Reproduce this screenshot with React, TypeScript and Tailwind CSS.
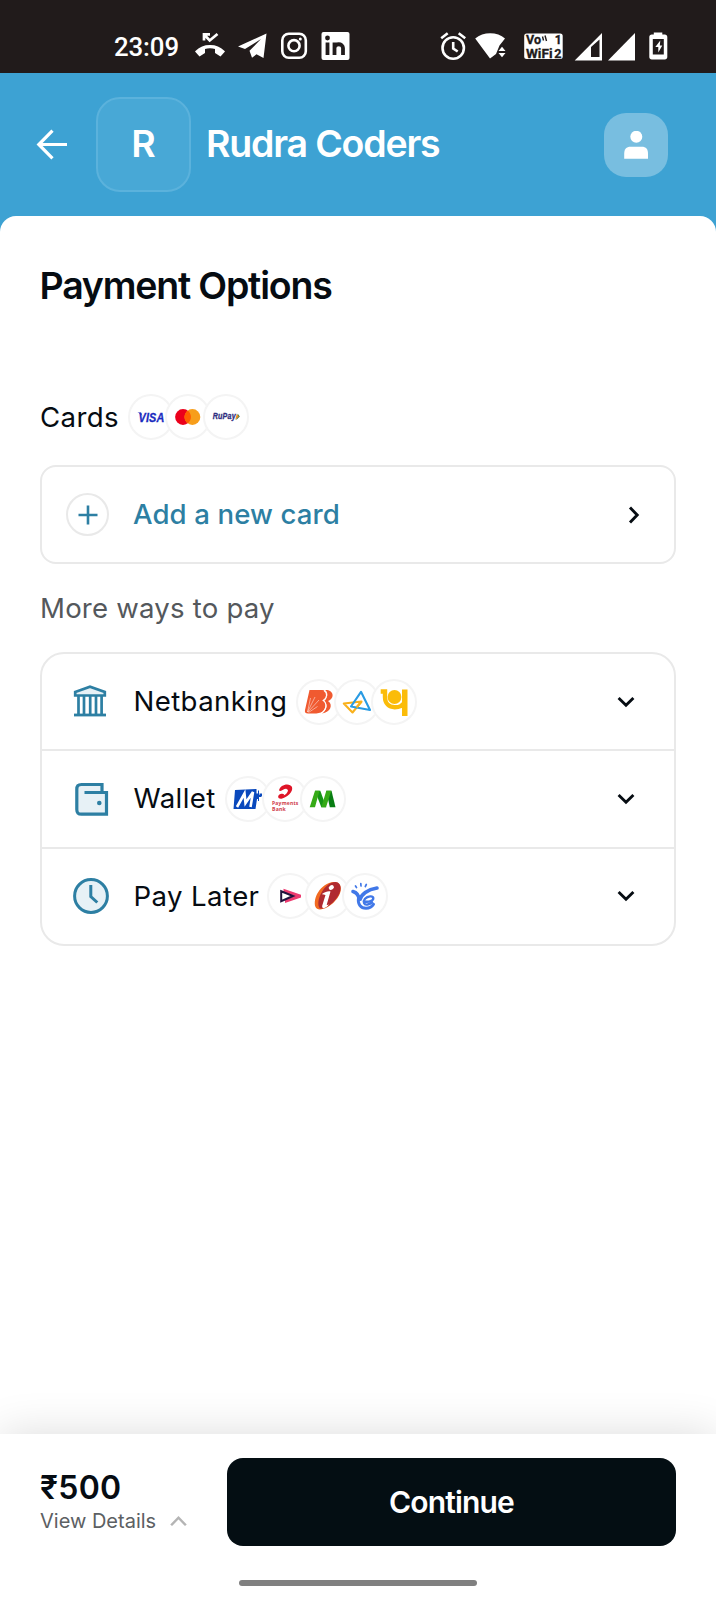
import React from "react";

const Stack = ({ children }: { children: React.ReactNode }) => (
  <div className="flex shrink-0 items-center">
    {React.Children.map(children, (child, i) => (
      <svg
        viewBox="0 0 46 46"
        className={
          i === 0
            ? "size-[46px] rounded-full bg-white outline-2 -outline-offset-2 outline-[#f4f4f4]"
            : "-ml-[8.3px] size-[46px] rounded-full bg-white outline-2 -outline-offset-2 outline-[#f4f4f4]"
        }
      >
        {child}
      </svg>
    ))}
  </div>
);

const Visa = () => (
  <g>
    <text x="10.500" y="27.600" textLength="26" lengthAdjust="spacingAndGlyphs" fontSize="12.300" fill="#1a2bc0" stroke="#1a2bc0" strokeWidth=".3" className="font-['Liberation_Sans'] font-bold italic">VISA</text>
    <path d="M9.500 18.600h3.500l1.500 4c-.8-2-2.500-3.200-5-4z" fill="#1a2bc0" />
  </g>
);
const Mastercard = () => (
  <g>
    <circle cx="18" cy="23" r="7.900" fill="#eb001b" />
    <circle cx="27.400" cy="23" r="7.900" fill="#f79e1b" />
    <path d="M22.700 16.600a7.900 7.900 0 0 1 0 12.800a7.900 7.900 0 0 1 0-12.800z" fill="#ff5f00" />
  </g>
);
const Rupay = () => (
  <g>
    <text x="9.800" y="25.400" textLength="23" lengthAdjust="spacingAndGlyphs" fontSize="8.500" fill="#302f80" stroke="#302f80" strokeWidth=".3" className="font-['Liberation_Sans'] font-bold italic">RuPay</text>
    <path d="M34.800 19.800l2 2.800-3.600 3.400z" fill="#2f7d4f" />
    <path d="M33.800 19.800l2 2.800-3.600 3.400z" fill="#f08a24" />
  </g>
);
const Baroda = () => (
  <g>
    <path d="M13.500 11h12.500c5.500 0 6.500 7.500 1.500 10.500 4 2.500 2 8.500-1 11-2 1.600-5 2-9 2H12c-2.500 0-3.500-1-3-3.500z" fill="#f05a30" />
    <path d="M29 11c8.500-.5 10.500 8 3 11 5.500 3.500 2.500 11.500-6 12.500 5.500-4 6-9.500 2-12.500 4-3 4.500-8.500 1-11z" fill="#f05a30" />
    <path d="M28 11.500c4 2.500 3 8-.8 10 4.300 3 3.300 9.500-1.700 12.500" fill="none" stroke="#fff" strokeWidth="1.100" />
    <path d="M11.500 33L14.500 19M11.500 33L19 18M12 33L23 21M12.500 33.500l9-6" stroke="#fff" strokeWidth=".5" />
  </g>
);
const Axis = () => (
  <g fill="none" strokeWidth="2.100" strokeLinejoin="round">
    <path d="M9.800 24.500L27.500 22.500L18.500 33.500Z" stroke="#f9b11c" />
    <path d="M27 12.800L36 31L17 27.500Z" stroke="#299be3" />
    <path d="M27.500 22.500l-5 6" stroke="#f9b11c" />
  </g>
);
const Pnb = () => (
  <g>
    <path d="M9.700 12.500H14V18C14 24.500 18 28.200 23.700 28.200S31 26.500 33.600 24" fill="none" stroke="#fbbc09" strokeWidth="4.400" />
    <path d="M31 10.500h5.500V37h-5.500z" fill="#fbbc09" />
    <circle cx="23.500" cy="18" r="6.900" fill="#fbbc09" />
  </g>
);
const Mobikwik = () => (
  <g>
    <path d="M10 14l21.500-1v4.500h1.500v-3h1v4.500h2v2h-2v4h-1v-2H32L30.500 33H8.500z" fill="#0a49bd" />
    <path d="M34.500 17.500h2.500v3h-2.500z" fill="#0a49bd" />
    <path d="M12 31l7.500-13.500 1 9.500 7.500-11-2.500 15" fill="none" stroke="#fff" strokeWidth="2.600" />
  </g>
);
const Airtel = () => (
  <g>
    <path d="M17 14.500C18 8 28 6.500 30 11C31.500 16 25 21.500 19.500 22.700C15.500 23.200 15 19.500 18.500 18C21.700 17.300 22.800 18.500 21.500 19.600C25.500 17.600 27.500 13.500 24.500 12.900C21.500 12.500 19.500 16.300 17 14.500Z" fill="#df1528" />
    <text x="10" y="28.800" textLength="26.500" lengthAdjust="spacingAndGlyphs" fontSize="5.600" fill="#cf3c4c" className="font-['Open_Sans'] font-bold">Payments</text>
    <text x="10" y="34.800" textLength="14" lengthAdjust="spacingAndGlyphs" fontSize="5.600" fill="#cf3c4c" className="font-['Open_Sans'] font-bold">Bank</text>
  </g>
);
const GreenM = () => (
  <g>
    <path d="M15 14.700h5.300l6 16.600h-5z" fill="#159415" />
    <path d="M26.300 14.700h5.200l4 16.600h-5.700z" fill="#087d13" />
    <path d="M15 14.700h4.500L15 31.300H9.700zM26.300 14.700h5L26 31.300h-4.700z" fill="#35aa16" />
  </g>
);
const LazyPay = () => (
  <g>
    <path d="M16.500 15.800L34 21.700V24.600L18 30V26.500L27.500 23L16.500 19.500z" fill="#ed3b70" />
    <path d="M14.200 18.300L26 23L14.200 28.200Z" fill="#fff" stroke="#20123d" strokeWidth="2" />
  </g>
);
const Icici = () => (
  <g>
    <path d="M10.500 34C7.500 26 15 10 29 9C38 9 38 20 30 28C23 36 12.500 39 10.500 34z" fill="#f26a22" />
    <path d="M14 34C11 26 20 9 30.500 9C37.500 9.500 37 19 31 26C25 34 15 38 14 34z" fill="#b02a30" />
    <ellipse cx="26.300" cy="14.500" rx="2.800" ry="2.200" transform="rotate(-35 26.300 14.500)" fill="#fff" />
    <path d="M17 21c3.500-2 5.500-3 8.500-2.500L21.800 31.500c0 1 1.200.5 2.200-.5-2 4-7.500 6-6.800 1.800L20.500 22c-1.300-.5-2.300 0-3.500-1z" fill="#fff" />
  </g>
);
const PayYe = () => (
  <g fill="none" stroke="#4178e8" strokeLinecap="round">
    <path d="M11 18.500c4 1 6 4.500 6.500 9 1.500-6 8-11 17.500-12.500" strokeWidth="3.600" />
    <path d="M16.500 25c-1 6 2 10.300 7.500 10.300 4 0 6-1.500 7.500-4" strokeWidth="3" />
    <path d="M22 28.500c5 .8 9.500-.5 9.300-3.500-.3-2.500-5.500-2.200-8.300.8-2.500 3-1 6.500 2.500 5.700 2-.3 3.500-.8 4.700-2" strokeWidth="2.300" />
    <path d="M13.500 13l1 1.500M18.800 10.500l.2 2.500M24.300 11.500l-1 2" strokeWidth="1.700" />
  </g>
);

const BankIcon = () => (
  <svg viewBox="0 0 36 34" className="mb-0.5 h-[34px] w-9" fill="none" stroke="#2d7fa3" strokeWidth="2.700">
    <path d="M2.200 8L17 2.800L31.800 8V11.500H2.200z" fill="#e7f1f6" />
    <path d="M5.500 11.500v19M11 30.500v-19M17.200 30.500v-19M23 11.500v19M28.600 30.500v-19" />
    <path d="M1 31H33" strokeWidth="2.800" />
  </svg>
);
const WalletIcon = () => (
  <svg viewBox="0 0 36 36" className="size-9" fill="none" stroke="#2d7fa3" strokeWidth="3.200">
    <path d="M29 10.500V3.500H8.500C5 3.500 3.800 5 3.800 8.500v20c0 3.500 1.300 4.700 4.700 4.700h25V11.500H11.500" fill="#e7f1f6" />
    <circle cx="26.300" cy="22" r="2.300" fill="#2d7fa3" stroke="none" />
  </svg>
);
const ClockIcon = () => (
  <svg viewBox="0 0 36 36" className="size-9" fill="none" stroke="#2d7fa3" strokeWidth="3">
    <circle cx="18" cy="18" r="16.400" fill="#e7f1f6" />
    <path d="M17.800 7v11.500l6.500 6" />
  </svg>
);

const Down = () => (
  <svg viewBox="0 0 20 20" className="size-5 shrink-0" fill="none" stroke="#060c12" strokeWidth="2.900">
    <path d="M2.600 6l7.400 7.200L17.400 6" />
  </svg>
);

const Row = ({ icon, label, gap, children }: { icon: React.ReactNode; label: string; gap: string; children: React.ReactNode }) => (
  <div className="flex h-[97.300px] items-center border-b-2 border-[#e9e9e9] pr-[38px] pl-[31px] last:h-[95.800px] last:border-b-0">
    <div className="flex w-[60.500px] shrink-0">{icon}</div>
    <span className={`${gap} shrink-0 pb-px tracking-[0.400px] whitespace-nowrap`}>{label}</span>
    <Stack>{children}</Stack>
    <div className="grow" />
    <Down />
  </div>
);

const StatusBar = () => (
  <div className="flex h-[73px] items-center bg-[#211b1b] pt-[19px] text-white">
    <span className="ml-[114px] w-[81px] pt-px font-[Roboto] text-[25.800px] leading-8 font-medium tracking-[-0.100px]">23:09</span>
    <svg viewBox="0 0 156 32" className="h-8 w-[156px]" fill="none">
      <path d="M15 15C9 15 4.500 17 1 20.500l-1 1 4.500 5 5.500-3.500v-4c3-1 7-1 10 0v4l5.500 3.500 4.500-5-1-1C25.500 17 21 15 15 15z" fill="#fff" />
      <path d="M9 10.500V4.300H15M9.500 5l5.200 5.500L22.500 4" stroke="#fff" strokeWidth="2.700" />
      <path d="M43 16.500L71.500 3.500L68.500 28l-7-3.700-4.500 3.500-2.500-7L66 9 50 19z" fill="#fff" />
      <rect x="87.300" y="3.800" width="23.500" height="24" rx="6.500" stroke="#fff" strokeWidth="2.600" />
      <circle cx="99" cy="15.700" r="5.600" stroke="#fff" strokeWidth="2.600" />
      <circle cx="105.300" cy="9" r="1.500" fill="#fff" />
      <rect x="126.500" y="2" width="28" height="28" rx="2" fill="#fff" />
      <path d="M132.500 12.500v12.500M139.500 12.500v12.500M139.500 25v-7c0-5 8.500-5 8.500 0v7" stroke="#211b1b" strokeWidth="3.800" />
      <circle cx="132.500" cy="8" r="2.400" fill="#211b1b" />
    </svg>
    <svg viewBox="0 0 230 32" className="ml-[89px] h-8 w-[230px]" fill="none">
      <circle cx="13.200" cy="18" r="10.700" stroke="#fff" strokeWidth="2.600" />
      <path d="M1.200 8.300l6.500-5M25.200 8.300l-6.500-5M13.200 12v6.500l4.500 3" stroke="#fff" strokeWidth="2.600" />
      <path d="M35.200 8.500C43 1.500 57.500 1.500 65 8.500L59.500 15.500l-3.500 8.500L50 28.500z" fill="#fff" />
      <path d="M58.500 21l3.500-4.200 3.500 4.200zM58.500 23l3.500 4.200 3.500-4.200z" fill="#fff" />
      <rect x="84.200" y="3.500" width="38.500" height="25.500" rx="2.500" fill="#fff" />
      <g fill="#211b1b" stroke="#211b1b" strokeWidth=".3" className="font-[Roboto] font-bold">
        <text x="86" y="14" fontSize="12" textLength="15" lengthAdjust="spacingAndGlyphs">Vo</text>
        <text x="114.700" y="14" fontSize="12">1</text>
        <text x="86" y="27.500" fontSize="12.500" textLength="26.500" lengthAdjust="spacingAndGlyphs">WiFi</text>
        <text x="114.300" y="27.500" fontSize="12.500">2</text>
      </g>
      <path d="M102.500 6.500l1 4M105 5.500l1.500 5.500" stroke="#211b1b" strokeWidth="1.400" />
      <path fillRule="evenodd" d="M134.700 30.500L162 3v27.500zM151 27V17l8.500-7.500V27z" fill="#fff" />
      <path d="M168 30.500L195 3v27.500z" fill="#fff" />
      <path fillRule="evenodd" d="M213.800 2.500h8.500v2h2.500c1.500 0 2.500 1 2.500 2.500v20c0 1.500-1 2.500-2.500 2.500h-13c-1.500 0-2.500-1-2.500-2.500V7c0-1.500 1-2.500 2.500-2.500h2zM212.800 9v15.500h11V9z" fill="#fff" />
      <path d="M220.300 10.500l-5 6.500h3v5.500l4-7h-2.500z" fill="#fff" />
    </svg>
  </div>
);

export default function App() {
  return (
    <div className="flex h-[1600px] w-[716px] flex-col overflow-hidden bg-[#3da2d3] font-[Inter,sans-serif] text-[#060c12]">
      <StatusBar />
      <header className="flex h-[143px] shrink-0 items-center pr-12 pl-9 text-[37.500px] leading-[48px] font-semibold text-white">
        <svg viewBox="0 0 32 32" className="mr-7 size-8" fill="none" stroke="#fff" strokeWidth="3.200">
          <path d="M31 15.500H3M16.500 1.700L2.800 15.500l13.700 13.800" />
        </svg>
        <div className="flex size-[95px] items-center justify-center rounded-[24px] border-2 border-[#5bb2dc] bg-[#48a8d6]">
          <span className="pb-0.5">R</span>
        </div>
        <h1 className="ml-[15px] pb-0.5 whitespace-nowrap tracking-[-1.200px]">Rudra Coders</h1>
        <div className="ml-auto flex size-16 items-center justify-center rounded-[22px] bg-[#78bee0]">
          <svg viewBox="0 0 24 28" className="h-7 w-6" fill="#fff">
            <circle cx="12.300" cy="5.800" r="6" />
            <path d="M.2 27.800v-5c0-4.500 2-7 6.500-7h11c4.500 0 6.300 2.500 6.300 7v5z" />
          </svg>
        </div>
      </header>
      <main className="flex grow flex-col rounded-t-[16px] bg-white px-10 pt-[46px] text-[27.600px] leading-9 tracking-[0.200px]">
        <h2 className="-ml-[0.500px] text-[37.500px] leading-[48px] font-semibold tracking-[-1.200px] whitespace-nowrap">Payment Options</h2>
        <div className="mt-[84px] flex h-[46px] items-center">
          <span className="w-[87.500px] tracking-[0.400px]">Cards</span>
          <Stack>
            <Visa />
            <Mastercard />
            <Rupay />
          </Stack>
        </div>
        <div className="mt-[25px] flex h-[99px] w-[636px] items-center rounded-[16px] border-2 border-[#e9e9e9] pr-[30px] pl-6 text-[#2d7fa3]">
          <div className="mr-6 flex size-[43px] items-center justify-center rounded-full border-2 border-[#e9e9e9]">
            <svg viewBox="0 0 20 20" className="size-5" stroke="#2d7fa3" strokeWidth="2.600">
              <path d="M10 .5v19M.5 10h19" />
            </svg>
          </div>
          <span className="pb-px font-medium tracking-[0.100px] whitespace-nowrap">Add a new card</span>
          <div className="ml-auto -rotate-90">
            <Down />
          </div>
        </div>
        <p className="mt-[26px] text-[#54585c]">More ways to pay</p>
        <div className="mt-[26px] w-[636px] rounded-[24px] border-2 border-[#e9e9e9]">
          <Row icon={<BankIcon />} label="Netbanking" gap="w-[162.500px]">
            <Baroda />
            <Axis />
            <Pnb />
          </Row>
          <Row icon={<WalletIcon />} label="Wallet" gap="w-[91px]">
            <Mobikwik />
            <Airtel />
            <GreenM />
          </Row>
          <Row icon={<ClockIcon />} label="Pay Later" gap="w-[133.500px]">
            <LazyPay />
            <Icici />
            <PayYe />
          </Row>
        </div>
      </main>
      <footer className="flex h-[166px] shrink-0 flex-col items-center bg-white shadow-[0_0_42px_rgba(0,0,0,0.14)]">
        <div className="mt-6 flex w-[636px] items-center justify-between">
          <div className="flex flex-col pt-px">
            <span className="text-[32px] leading-9 font-semibold tracking-[0.300px]">₹500</span>
            <div className="flex items-center gap-[14px] text-[20px] leading-[30px] text-[#5c6063]">
              <span className="whitespace-nowrap">View Details</span>
              <svg viewBox="0 0 18 12" className="h-3 w-[17px]" fill="none" stroke="#b4b4b4" strokeWidth="2.600">
                <path d="M1.200 10.500L9 2.500l7.800 8" />
              </svg>
            </div>
          </div>
          <button className="h-[88px] w-[449px] rounded-[16px] bg-[#040e13] text-[30px] font-semibold tracking-[-0.850px] text-white">Continue</button>
        </div>
        <div className="mt-[34px] h-1.5 w-[238px] rounded-full bg-[#808080]" />
      </footer>
    </div>
  );
}
